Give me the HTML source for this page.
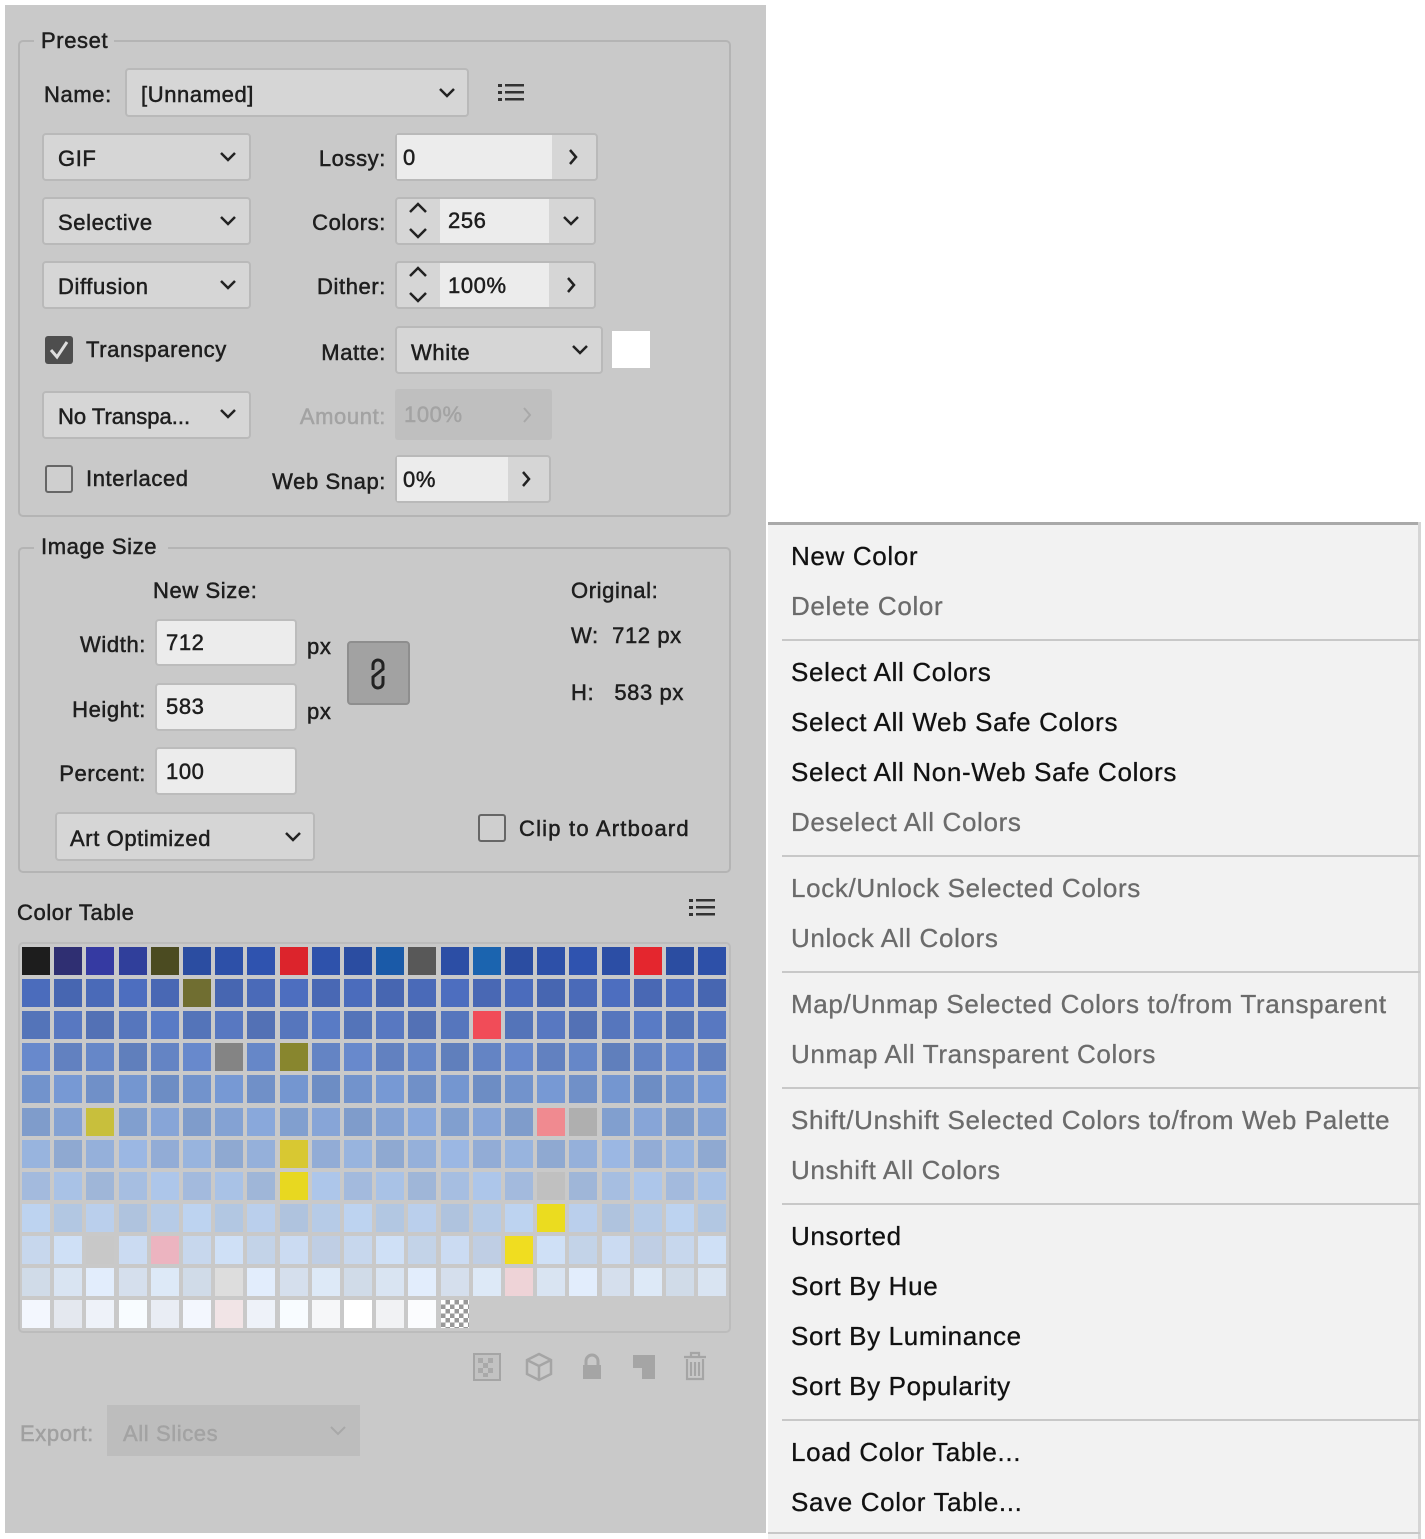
<!DOCTYPE html>
<html><head><meta charset="utf-8"><style>
*{box-sizing:border-box;margin:0;padding:0}
body{width:1425px;height:1539px;background:#fff;position:relative;overflow:hidden;font-family:"Liberation Sans",sans-serif;color:#1e1e1e}
.a{position:absolute}
.t{position:absolute;font-size:22px;letter-spacing:0.6px;line-height:26px;white-space:nowrap;-webkit-text-stroke:0.5px currentColor}
.r{text-align:right}
.box{position:absolute;border:2px solid #b4b4b4;border-radius:5px}
.dd{position:absolute;background:#d6d6d6;border:2px solid #b9b9b9;border-radius:4px}
.fl{position:absolute;background:#ececec;border:2px solid #bcbcbc;border-radius:4px}
.cell{position:absolute;width:28px;height:28px}
.m{position:absolute;left:791px;font-size:26px;line-height:30px;letter-spacing:0.65px;color:#111;white-space:nowrap;-webkit-text-stroke:0.3px currentColor}
.g{color:#6b6b6b}
.sep{position:absolute;left:782px;width:638px;height:2px;background:#c8c8c8}
</style></head><body>
<div class="a" style="left:5px;top:5px;width:761px;height:1528px;background:#c9c9c9"></div>

<div class="box" style="left:18px;top:40px;width:713px;height:477px"></div>
<div class="a" style="left:34px;top:30px;width:80px;height:20px;background:#c9c9c9"></div>
<div class="t" style="left:41px;top:28px">Preset</div>

<div class="t" style="left:44px;top:82px">Name:</div>
<div class="dd" style="left:125px;top:68px;width:344px;height:49px"></div>
<div class="t" style="left:141px;top:82px">[Unnamed]</div>
<svg class="a" style="left:437px;top:86px" width="20" height="14"><polyline points="3,3 10,10 17,3" fill="none" stroke="#222" stroke-width="2.5"/></svg>
<svg class="a" style="left:497px;top:82px" width="30" height="22"><g fill="#333"><rect x="1" y="2" width="4" height="3"/><rect x="1" y="9" width="4" height="3"/><rect x="1" y="16" width="4" height="3"/><rect x="8" y="2" width="19" height="2.5"/><rect x="8" y="9" width="19" height="2.5"/><rect x="8" y="16" width="19" height="2.5"/></g></svg>

<div class="dd" style="left:42px;top:133px;width:209px;height:48px"></div><div class="t" style="left:58px;top:146px">GIF</div>
<div class="dd" style="left:42px;top:197px;width:209px;height:48px"></div><div class="t" style="left:58px;top:210px">Selective</div>
<div class="dd" style="left:42px;top:261px;width:209px;height:48px"></div><div class="t" style="left:58px;top:274px">Diffusion</div>
<div class="dd" style="left:42px;top:391px;width:209px;height:48px"></div><div class="t" style="left:58px;top:404px;letter-spacing:0">No Transpa...</div>
<svg class="a" style="left:218px;top:150px" width="20" height="14"><polyline points="3,3 10,10 17,3" fill="none" stroke="#222" stroke-width="2.5"/></svg>
<svg class="a" style="left:218px;top:214px" width="20" height="14"><polyline points="3,3 10,10 17,3" fill="none" stroke="#222" stroke-width="2.5"/></svg>
<svg class="a" style="left:218px;top:278px" width="20" height="14"><polyline points="3,3 10,10 17,3" fill="none" stroke="#222" stroke-width="2.5"/></svg>
<svg class="a" style="left:218px;top:407px" width="20" height="14"><polyline points="3,3 10,10 17,3" fill="none" stroke="#222" stroke-width="2.5"/></svg>

<div class="t r" style="left:240px;width:146px;top:146px">Lossy:</div>
<div class="dd" style="left:395px;top:133px;width:203px;height:48px"></div>
<div class="a" style="left:397px;top:135px;width:155px;height:44px;background:#ececec"></div>
<div class="t" style="left:403px;top:145px">0</div>
<svg class="a" style="left:566px;top:147px" width="14" height="20"><polyline points="4,3 10,10 4,17" fill="none" stroke="#222" stroke-width="2.5"/></svg>

<div class="t r" style="left:240px;width:146px;top:210px">Colors:</div>
<div class="dd" style="left:395px;top:197px;width:201px;height:48px"></div>
<div class="a" style="left:440px;top:199px;width:109px;height:44px;background:#ececec"></div>
<div class="t" style="left:448px;top:208px">256</div>
<svg class="a" style="left:406px;top:200px" width="24" height="42"><polyline points="4,12 12,4 20,12" fill="none" stroke="#222" stroke-width="2.5"/><polyline points="4,29 12,37 20,29" fill="none" stroke="#222" stroke-width="2.5"/></svg>
<svg class="a" style="left:561px;top:214px" width="20" height="14"><polyline points="3,3 10,10 17,3" fill="none" stroke="#222" stroke-width="2.5"/></svg>

<div class="t r" style="left:240px;width:146px;top:274px">Dither:</div>
<div class="dd" style="left:395px;top:261px;width:201px;height:48px"></div>
<div class="a" style="left:440px;top:263px;width:109px;height:44px;background:#ececec"></div>
<div class="t" style="left:448px;top:273px">100%</div>
<svg class="a" style="left:406px;top:264px" width="24" height="42"><polyline points="4,12 12,4 20,12" fill="none" stroke="#222" stroke-width="2.5"/><polyline points="4,29 12,37 20,29" fill="none" stroke="#222" stroke-width="2.5"/></svg>
<svg class="a" style="left:564px;top:275px" width="14" height="20"><polyline points="4,3 10,10 4,17" fill="none" stroke="#222" stroke-width="2.5"/></svg>

<div class="a" style="left:45px;top:336px;width:28px;height:28px;background:#4e4e4e;border-radius:3px"></div>
<svg class="a" style="left:45px;top:336px" width="28" height="28"><polyline points="6,14 12,21 22,6" fill="none" stroke="#ddd" stroke-width="3"/></svg>
<div class="t" style="left:86px;top:337px">Transparency</div>
<div class="t r" style="left:240px;width:146px;top:340px">Matte:</div>
<div class="dd" style="left:395px;top:326px;width:208px;height:48px"></div>
<div class="t" style="left:411px;top:340px">White</div>
<svg class="a" style="left:570px;top:343px" width="20" height="14"><polyline points="3,3 10,10 17,3" fill="none" stroke="#222" stroke-width="2.5"/></svg>
<div class="a" style="left:612px;top:331px;width:38px;height:37px;background:#fff"></div>

<div class="t r" style="left:240px;width:146px;top:404px;color:#a3a3a3">Amount:</div>
<div class="a" style="left:395px;top:389px;width:157px;height:51px;background:#bfbfbf;border-radius:3px"></div>
<div class="t" style="left:404px;top:402px;color:#a3a3a3">100%</div>
<svg class="a" style="left:520px;top:405px" width="14" height="20"><polyline points="4,3 10,10 4,17" fill="none" stroke="#a8a8a8" stroke-width="2"/></svg>

<div class="a" style="left:45px;top:465px;width:28px;height:28px;border:2px solid #666;border-radius:3px;background:#cfcfcf"></div>
<div class="t" style="left:86px;top:466px">Interlaced</div>
<div class="t r" style="left:230px;width:156px;top:469px">Web Snap:</div>
<div class="dd" style="left:395px;top:455px;width:156px;height:48px"></div>
<div class="a" style="left:397px;top:457px;width:111px;height:44px;background:#ececec"></div>
<div class="t" style="left:403px;top:467px">0%</div>
<svg class="a" style="left:519px;top:469px" width="14" height="20"><polyline points="4,3 10,10 4,17" fill="none" stroke="#222" stroke-width="2.5"/></svg>

<div class="box" style="left:18px;top:547px;width:713px;height:326px"></div>
<div class="a" style="left:34px;top:537px;width:134px;height:20px;background:#c9c9c9"></div>
<div class="t" style="left:41px;top:534px">Image Size</div>
<div class="t" style="left:153px;top:578px">New Size:</div>
<div class="t" style="left:571px;top:578px">Original:</div>
<div class="t r" style="left:30px;width:116px;top:632px">Width:</div>
<div class="t r" style="left:30px;width:116px;top:697px">Height:</div>
<div class="t r" style="left:30px;width:116px;top:761px">Percent:</div>
<div class="fl" style="left:155px;top:619px;width:142px;height:47px"></div><div class="t" style="left:166px;top:630px">712</div>
<div class="fl" style="left:155px;top:683px;width:142px;height:48px"></div><div class="t" style="left:166px;top:694px">583</div>
<div class="fl" style="left:155px;top:747px;width:142px;height:48px"></div><div class="t" style="left:166px;top:759px">100</div>
<div class="t" style="left:307px;top:634px">px</div>
<div class="t" style="left:307px;top:699px">px</div>
<div class="a" style="left:347px;top:641px;width:63px;height:64px;background:#a2a2a2;border:2px solid #8e8e8e;border-radius:4px"></div>
<svg class="a" style="left:364px;top:656px" width="28" height="36"><path d="M9 14 V9 a5 5 0 0 1 10 0 V13 L9 21 V27 a5 5 0 0 0 10 0 V20" fill="none" stroke="#222" stroke-width="3"/></svg>
<div class="t" style="left:571px;top:623px">W:&nbsp;&nbsp;712 px</div>
<div class="t" style="left:571px;top:680px">H:&nbsp;&nbsp;&nbsp;583 px</div>
<div class="dd" style="left:55px;top:812px;width:260px;height:49px"></div>
<div class="t" style="left:70px;top:826px">Art Optimized</div>
<svg class="a" style="left:283px;top:830px" width="20" height="14"><polyline points="3,3 10,10 17,3" fill="none" stroke="#222" stroke-width="2.5"/></svg>
<div class="a" style="left:478px;top:814px;width:28px;height:28px;border:2px solid #666;border-radius:3px;background:#cfcfcf"></div>
<div class="t" style="left:519px;top:816px;letter-spacing:1.2px">Clip to Artboard</div>

<div class="t" style="left:17px;top:900px">Color Table</div>
<svg class="a" style="left:688px;top:897px" width="30" height="22"><g fill="#333"><rect x="1" y="2" width="4" height="3"/><rect x="1" y="9" width="4" height="3"/><rect x="1" y="16" width="4" height="3"/><rect x="8" y="2" width="19" height="2.5"/><rect x="8" y="9" width="19" height="2.5"/><rect x="8" y="16" width="19" height="2.5"/></g></svg>
<div class="box" style="left:18px;top:942px;width:713px;height:391px;border-color:#bcbcbc"></div>
<div id="grid"></div>

<svg class="a" style="left:472px;top:1352px" width="30" height="30"><rect x="2" y="2" width="26" height="26" fill="#c2c2c2" stroke="#a5a5a5" stroke-width="2"/><g fill="#a9a9a9"><rect x="6" y="6" width="5" height="5"/><rect x="16" y="6" width="5" height="5"/><rect x="11" y="11" width="5" height="5"/><rect x="6" y="16" width="5" height="5"/><rect x="16" y="16" width="5" height="5"/><rect x="11" y="21" width="5" height="4"/></g></svg>
<svg class="a" style="left:524px;top:1351px" width="30" height="32"><path d="M15 3 L27 9 V23 L15 29 L3 23 V9 Z M3 9 L15 15 L27 9 M15 15 V29" fill="none" stroke="#a5a5a5" stroke-width="2.5"/></svg>
<svg class="a" style="left:580px;top:1352px" width="24" height="30"><path d="M6 13 V9 a6 6 0 0 1 12 0 V13" fill="none" stroke="#a5a5a5" stroke-width="3"/><rect x="3" y="13" width="18" height="14" fill="#a5a5a5"/></svg>
<svg class="a" style="left:630px;top:1352px" width="28" height="30"><path d="M3 3 H25 V27 H12 V16 H3 Z" fill="#a5a5a5"/></svg>
<svg class="a" style="left:681px;top:1350px" width="28" height="32"><path d="M3 7 H25 M10 7 V3 H18 V7 M6 9 V29 H22 V9 M10 12 V26 M14 12 V26 M18 12 V26" fill="none" stroke="#a5a5a5" stroke-width="2.2"/></svg>

<div class="t" style="left:20px;top:1421px;color:#a0a0a0">Export:</div>
<div class="a" style="left:107px;top:1405px;width:253px;height:51px;background:#bdbdbd"></div>
<div class="t" style="left:123px;top:1421px;color:#a3a3a3">All Slices</div>
<svg class="a" style="left:328px;top:1424px" width="20" height="14"><polyline points="3,3 10,10 17,3" fill="none" stroke="#a8a8a8" stroke-width="2"/></svg>

<div class="a" style="left:768px;top:522px;width:652px;height:1017px;background:#f2f2f2;border-top:3px solid #a9a9a9"></div>
<div class="a" style="left:1418px;top:522px;width:3px;height:1017px;background:#d5d5d5"></div>
<div class="m" style="top:541px">New Color</div>
<div class="m g" style="top:591px">Delete Color</div>
<div class="sep" style="top:639px"></div>
<div class="m" style="top:657px">Select All Colors</div>
<div class="m" style="top:707px">Select All Web Safe Colors</div>
<div class="m" style="top:757px">Select All Non-Web Safe Colors</div>
<div class="m g" style="top:807px">Deselect All Colors</div>
<div class="sep" style="top:855px"></div>
<div class="m g" style="top:873px">Lock/Unlock Selected Colors</div>
<div class="m g" style="top:923px">Unlock All Colors</div>
<div class="sep" style="top:971px"></div>
<div class="m g" style="top:989px">Map/Unmap Selected Colors to/from Transparent</div>
<div class="m g" style="top:1039px">Unmap All Transparent Colors</div>
<div class="sep" style="top:1087px"></div>
<div class="m g" style="top:1105px">Shift/Unshift Selected Colors to/from Web Palette</div>
<div class="m g" style="top:1155px">Unshift All Colors</div>
<div class="sep" style="top:1203px"></div>
<div class="m" style="top:1221px">Unsorted</div>
<div class="m" style="top:1271px">Sort By Hue</div>
<div class="m" style="top:1321px">Sort By Luminance</div>
<div class="m" style="top:1371px">Sort By Popularity</div>
<div class="sep" style="top:1419px"></div>
<div class="m" style="top:1437px">Load Color Table...</div>
<div class="m" style="top:1487px">Save Color Table...</div>
<div class="sep" style="top:1532px;left:768px;width:652px"></div>

<script>
var base=["#2d50a8","#4a6ab8","#5676bd","#6484c4","#7293cc","#84a2d3","#95b0da","#a6bee1","#b6cbe7","#c7d7ed","#d9e4f2","#eef2f9"];
var sp={"0,0":"#1e1e1e","0,1":"#2f2f72","0,2":"#33389c","0,3":"#31409e","0,4":"#4a4a20","0,8":"#e0252d","0,11":"#1a5aa8","0,12":"#555","0,14":"#1a62ac","0,19":"#e0252d","1,5":"#6e6c30","2,14":"#e84955","3,6":"#878787","3,8":"#8e8c30","5,2":"#c0b83a","5,16":"#f08a90","5,17":"#a8a8a8","6,8":"#d0c030","7,8":"#e8d820","7,16":"#bcbcbc","8,16":"#f0e020","9,2":"#cccccc","9,4":"#f6bcc8","9,15":"#f0dd20","10,6":"#dddddd","10,15":"#f8dce0","11,6":"#fbeef0"};
var h="";
for(var r=0;r<12;r++){for(var c=0;c<22;c++){if(r==11&&c>13)break;var x=22+c*32.2,y=947+r*32.1;
var col=sp[r+","+c]||base[r];
if(r==11&&c>=9&&c<=12)col="#fbfcfe";
if(r==11&&c==13){h+='<div class="cell" style="left:'+x+'px;top:'+y+'px;background:#fff;background-image:conic-gradient(#999 25%,#fff 0 50%,#999 0 75%,#fff 0);background-size:9px 9px"></div>';continue;}
var v=(c*7+r*3)%5;h+='<div class="cell" style="left:'+x+'px;top:'+y+'px;background:'+col+';filter:brightness('+(0.96+v*0.02)+')"></div>';}}
document.getElementById("grid").innerHTML=h;
</script>
</body></html>
